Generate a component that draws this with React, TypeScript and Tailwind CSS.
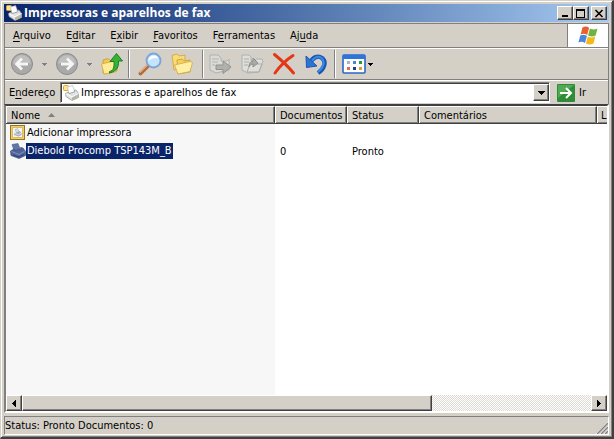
import type { ReactNode } from "react";

const MENU_ITEMS = [
  { before: "", key: "A", after: "rquivo" },
  { before: "E", key: "d", after: "itar" },
  { before: "E", key: "x", after: "ibir" },
  { before: "", key: "F", after: "avoritos" },
  { before: "F", key: "e", after: "rramentas" },
  { before: "Aj", key: "u", after: "da" },
];

const PRINTERS = [
  { name: "Adicionar impressora", documents: "", status: "", comments: "", selected: false },
  { name: "Diebold Procomp TSP143M_B", documents: "0", status: "Pronto", comments: "", selected: true },
];

const RAISED =
  "border border-t-white border-l-white border-r-[#404040] border-b-[#404040] bg-[#d4d0c8] shadow-[inset_-1px_-1px_0_#808080]";

function PrinterFolderIcon() {
  return (
    <svg className="size-4 shrink-0" viewBox="0 0 16 16" aria-hidden="true">
      <rect x="0.5" y="0.5" width="5" height="5" rx="1" fill="#ffe58a" stroke="#d2a52e" />
      <path d="M4.500 2l5-1.500L12 7l-6 2z" fill="#fff" stroke="#a4adbd" strokeWidth="0.6" />
      <path d="M2.500 8.500L5 7l1 1.500L11.500 7l-.5-1.500 2-.5 2.500 3.500v4L9 15.500l-6-4z" fill="#e2e2de" stroke="#8b8e96" strokeWidth="0.7" />
      <path d="M3 9l6 3 6.500-3.500" fill="none" stroke="#fff" />
      <path d="M9 12.500v3l6.500-3V9z" fill="#b3b5b8" />
      <path d="M10.500 14.500l3-1.500" stroke="#e4b32c" />
    </svg>
  );
}

function AddPrinterIcon() {
  return (
    <svg className="size-4 shrink-0" viewBox="0 0 16 16" aria-hidden="true">
      <rect x="0.5" y="0.5" width="14" height="14" fill="#f2cf62" stroke="#94762a" />
      <rect x="2.500" y="2.500" width="10" height="10" fill="#f8f6ee" stroke="#d8bb68" />
      <path d="M5 4.500l2.500-1L9.500 7 6.500 8z" fill="#d5dce8" stroke="#a3aec0" strokeWidth="0.6" />
      <path d="M4 8.500L9.500 6l2 2v2L8.500 11.500 4 10z" fill="#a3afc2" />
      <path d="M4.500 8.500l4 1.200L11 8.300" fill="none" stroke="#eef1f6" strokeWidth="0.7" />
    </svg>
  );
}

function PrinterIcon() {
  return (
    <svg className="size-4 shrink-0" viewBox="0 0 16 16" aria-hidden="true">
      <path d="M2 1.500L8 .5 10.500 7l-6 2z" fill="#6275a6" stroke="#4a5c8b" strokeWidth="0.6" />
      <path d="M.5 8l3.500-2 1 1.500 6-1.500-.5-1.500 2.500.5 2.500 3.500v4l-6.500 3-8-3z" fill="#50639a" stroke="#3b4d7c" strokeWidth="0.7" />
      <path d="M1.500 8.500l7.500 3 5.500-3" fill="none" stroke="#8393bd" />
      <path d="M3 12l6 2 5-2.500" fill="none" stroke="#2f4070" />
    </svg>
  );
}

function WindowsFlag() {
  return (
    <svg className="size-5" viewBox="0 0 20 20" aria-hidden="true">
      <path d="M4.500 1.600c2-1.500 4.500-1.300 6.600.2L9.200 8.900C7 7.500 4.700 7.400 2.600 8.600z" fill="#e8602c" />
      <path d="M11.900 2.500c2.500 1.400 5 1.400 7.600.1l-1.900 6.900c-2.500 1.300-5 1.200-7.500-.1z" fill="#6db33f" />
      <path d="M2.300 9.500c2.200-1.200 4.400-1 6.600.4L7 16.900c-2.300-1.500-4.500-1.500-6.600-.4z" fill="#4a86dd" />
      <path d="M9.800 10.400c2.500 1.400 5 1.300 7.500.1l-1.800 6.900c-2.600 1.400-5.100 1.300-7.600 0z" fill="#f5b91c" />
    </svg>
  );
}

function NavIcon({ forward = false }: { forward?: boolean }) {
  return (
    <svg className="size-6" viewBox="0 0 24 24" aria-hidden="true">
      <circle cx="12" cy="12" r="10.500" fill="#a9a9a9" stroke="#8c8c8c" />
      <path d="M3 12a9 9 0 0 1 18 0c-5-3-13-3-18 0z" fill="#bfbfbf" />
      <path
        d={forward ? "M6 12h11M12 6.500l5.500 5.500-5.500 5.500" : "M18 12H7M12 6.500L6.500 12l5.500 5.500"}
        fill="none"
        stroke="#f5f5f5"
        strokeWidth="2.800"
      />
    </svg>
  );
}

function FolderUpIcon() {
  return (
    <svg className="size-6" viewBox="0 0 24 24" aria-hidden="true">
      <path d="M3 8l5-1.500 2 2 7-1.500v12L5 22l-2-1z" fill="#f0c94e" stroke="#c79a2c" strokeWidth="0.8" />
      <path d="M1.500 12l13-3 3 1-2 10L4 22z" fill="#ffeb9a" stroke="#d3a93a" strokeWidth="0.8" />
      <path d="M9.500 19.500c4-1 4.800-4 4.500-10h-4l6.500-8 6 7.500h-4c.5 6-2 10.500-9 12z" fill="#35b335" stroke="#177517" strokeWidth="0.9" />
    </svg>
  );
}

function SearchIcon() {
  return (
    <svg className="size-6" viewBox="0 0 24 24" aria-hidden="true">
      <path d="M10.500 13.500L2.500 21.500" stroke="#b3683a" strokeWidth="3.800" strokeLinecap="round" />
      <path d="M10 12.500l-8 8" stroke="#e8b07e" strokeWidth="1.200" />
      <circle cx="15.500" cy="8.500" r="7" fill="#c3e4fa" stroke="#7ba4d8" strokeWidth="1.800" />
      <path d="M10.500 9a5.200 5.200 0 0 1 5.500-5.500c2.500 0 4 1.500 4 3-4-1-6.500 0-9.500 2.500z" fill="#fff" />
    </svg>
  );
}

function FoldersIcon() {
  return (
    <svg className="size-6" viewBox="0 0 24 24" aria-hidden="true">
      <path d="M2 3.500L7 2l2 2 6-1v12L4 18z" fill="#f8dc78" stroke="#d0a136" strokeWidth="0.8" />
      <path d="M7 8l5-1 2 2 6-1v12L8 22z" fill="#f5d25f" stroke="#c99a30" strokeWidth="0.8" />
      <path d="M4.500 13L20 9.500l2.500 1-2.500 9L8 22z" fill="#fff0a6" stroke="#d3a93a" strokeWidth="0.8" />
    </svg>
  );
}

function MoveToIcon() {
  return (
    <svg className="size-6" viewBox="0 0 24 24" aria-hidden="true">
      <path d="M2 3h8l3 3v3h6l2-2v11l-13 3-6-3z" fill="#dadad6" stroke="#b0b0ac" />
      <path d="M4 7h7M4 10h6M4 13h3" stroke="#b3b3af" />
      <path d="M8 13h7V9l8 6-8 6.500v-4H8z" fill="#b0b0ac" stroke="#92928e" />
    </svg>
  );
}

function CopyToIcon() {
  return (
    <svg className="size-6" viewBox="0 0 24 24" aria-hidden="true">
      <path d="M2 3h7l2 2v4h4l1-2h6l1 2-4 11-11 1-6-3z" fill="#dededa" stroke="#b0b0ac" />
      <path d="M4 7h5M4 10h5M4 13h4M7 20l3-8h12l-3 8z" fill="none" stroke="#adada9" />
      <path d="M9 15c0-4 2-6 4-6V6l5 5-5 4v-3c-2 0-3 1-4 3z" fill="#a9a9a5" stroke="#8f8f8b" />
    </svg>
  );
}

function DeleteIcon() {
  return (
    <svg className="size-6" viewBox="0 0 24 24" aria-hidden="true">
      <path d="M2.500 2.500C8 7 15 13 21.500 21M21 3.500C14 8 8 14 3 21" fill="none" stroke="#e33716" strokeWidth="3" strokeLinecap="round" />
    </svg>
  );
}

function UndoIcon() {
  return (
    <svg className="size-6" viewBox="0 0 24 24" aria-hidden="true">
      <path d="M6 11c3-6 8-8 12-5 5 4 2 11-4 15" fill="none" stroke="#1c57b0" strokeWidth="4.400" />
      <path d="M6.500 11c3-6 7.500-7.500 11-5 4 3.500 2 10-3.500 14" fill="none" stroke="#3b8be6" strokeWidth="2" />
      <path d="M2 4l.5 11.500L13 14z" fill="#2b74d2" stroke="#1c57b0" />
    </svg>
  );
}

function ViewsIcon() {
  return (
    <svg className="size-6" viewBox="0 0 24 24" aria-hidden="true">
      <rect x="1" y="3" width="22" height="18" rx="1" fill="#fff" stroke="#2867c8" strokeWidth="1.600" />
      <path d="M1 3h22v4H1z" fill="#2f74dc" />
      <path d="M5 9h3v3H5z" fill="#a8b3d0" />
      <path d="M11 9h3v3h-3z" fill="#4f82d8" />
      <path d="M17 9h3v3h-3z" fill="#279a2d" />
      <path d="M5 15h3v3H5z" fill="#e2703a" />
      <path d="M11 15h3v3h-3z" fill="#243c94" />
      <path d="M17 15h3v3h-3z" fill="#d4a22d" />
    </svg>
  );
}

function Caret({ className }: { className: string }) {
  return (
    <svg className={`h-[3px] w-[5px] shrink-0 ${className}`} viewBox="0 0 5 3" shapeRendering="crispEdges" aria-hidden="true">
      <path d="M0 0h5L2.500 3z" fill="currentColor" />
    </svg>
  );
}

function ToolButton({ label, children }: { label: string; children: ReactNode }) {
  return (
    <button type="button" aria-label={label} className="flex shrink-0 items-center">
      {children}
    </button>
  );
}

function Separator() {
  return <div className="mx-1 h-7 w-[2px] shrink-0 border-r border-l border-r-white border-l-[#808080]" />;
}

function TitleBar() {
  const button = `flex h-[14px] w-4 items-center justify-center ${RAISED}`;
  return (
    <header className="flex h-[18px] items-center bg-linear-to-r from-[#0a246a] to-[#a6caf0] pr-[2px] pl-[2px]">
      <PrinterFolderIcon />
      <h1 className="ml-[2px] flex-1 font-['Open_Sans','DejaVu_Sans_Condensed',sans-serif] text-[12px] leading-[18px] font-bold whitespace-nowrap text-white">
        Impressoras e aparelhos de fax
      </h1>
      <button type="button" aria-label="Minimizar" className={button}>
        <svg className="h-[9px] w-[10px]" viewBox="0 0 10 9" shapeRendering="crispEdges" aria-hidden="true">
          <path d="M2 6h6v2H2z" />
        </svg>
      </button>
      <button type="button" aria-label="Maximizar" className={button}>
        <svg className="h-[9px] w-[10px]" viewBox="0 0 10 9" shapeRendering="crispEdges" aria-hidden="true">
          <path fillRule="evenodd" d="M0 0h9v9H0zM1 2v6h7V2z" />
        </svg>
      </button>
      <button type="button" aria-label="Fechar" className={`ml-[2px] ${button}`}>
        <svg className="h-[9px] w-[10px]" viewBox="0 0 10 9" aria-hidden="true">
          <path d="M1.500 1l7 7M8.500 1l-7 7" stroke="#000" strokeWidth="1.600" />
        </svg>
      </button>
    </header>
  );
}

function MenuBar() {
  return (
    <div className="flex h-6 border-b border-[#808080]">
      <nav className="flex flex-1 items-center gap-[15px] border-r border-[#808080] pl-2">
        {MENU_ITEMS.map((item) => (
          <button type="button" key={item.before + item.key + item.after}>
            {item.before}
            <span className="underline underline-offset-2">{item.key}</span>
            {item.after}
          </button>
        ))}
      </nav>
      <div className="flex w-10 items-center justify-center bg-white">
        <WindowsFlag />
      </div>
    </div>
  );
}

function Toolbar() {
  return (
    <div className="flex h-8 items-center border-t border-b border-t-white border-b-[#808080] pl-[5px]">
      <ToolButton label="Voltar">
        <NavIcon />
        <Caret className="mx-2 text-[#808080]" />
      </ToolButton>
      <ToolButton label="Avançar">
        <NavIcon forward />
        <Caret className="mx-2 text-[#808080]" />
      </ToolButton>
      <ToolButton label="Acima">
        <FolderUpIcon />
      </ToolButton>
      <Separator />
      <div className="flex gap-2 px-1">
        <ToolButton label="Pesquisar">
          <SearchIcon />
        </ToolButton>
        <ToolButton label="Pastas">
          <FoldersIcon />
        </ToolButton>
      </div>
      <Separator />
      <div className="flex gap-2 pr-[2px]">
        <ToolButton label="Mover para">
          <MoveToIcon />
        </ToolButton>
        <ToolButton label="Copiar para">
          <CopyToIcon />
        </ToolButton>
        <ToolButton label="Excluir">
          <DeleteIcon />
        </ToolButton>
        <ToolButton label="Desfazer">
          <UndoIcon />
        </ToolButton>
      </div>
      <Separator />
      <div className="pl-[2px]">
        <ToolButton label="Modos de exibição">
          <ViewsIcon />
          <Caret className="ml-[2px] text-black" />
        </ToolButton>
      </div>
    </div>
  );
}

function AddressBar() {
  return (
    <div className="flex h-6 items-center border-t border-t-white pl-1">
      <label htmlFor="address" className="w-[51px] shrink-0">
        E<span className="underline underline-offset-2">n</span>dereço
      </label>
      <div className="flex h-[21px] flex-1 items-center border border-t-[#808080] border-r-white border-b-white border-l-[#808080] bg-white pl-[2px] shadow-[inset_1px_1px_0_#404040]">
        <PrinterFolderIcon />
        <input
          id="address"
          defaultValue="Impressoras e aparelhos de fax"
          className="ml-[2px] min-w-0 flex-1 bg-transparent outline-none"
        />
        <button type="button" aria-label="Mostrar endereços" className={`flex h-[17px] w-4 items-center justify-center ${RAISED}`}>
          <svg className="h-1 w-[7px]" viewBox="0 0 7 4" shapeRendering="crispEdges" aria-hidden="true">
            <path d="M0 0h7L3.500 4z" />
          </svg>
        </button>
      </div>
      <button type="button" className="flex w-[58px] shrink-0 items-center gap-1 pl-[7px]">
        <svg className="size-[18px]" viewBox="0 0 18 18" aria-hidden="true">
          <rect width="18" height="18" rx="1" fill="#2f8c36" />
          <path d="M1 1h16L1 14z" fill="#52a954" />
          <path d="M3 9h11M9 4l5 5-5 5" fill="none" stroke="#fff" strokeWidth="2" />
        </svg>
        Ir
      </button>
    </div>
  );
}

function PrinterList() {
  const head =
    "h-[18px] overflow-hidden whitespace-nowrap border-t border-r border-b border-t-white border-r-[#404040] border-b-[#404040] bg-[#d4d0c8] pl-[5px] text-left font-normal shadow-[inset_1px_0_0_#fff,inset_-1px_-1px_0_#808080]";
  return (
    <div className="flex-1 overflow-hidden bg-linear-to-r from-[#f7f7f7] from-[269px] to-white to-[269px]">
      <table className="w-full table-fixed border-separate border-spacing-0">
        <colgroup>
          <col className="w-[269px]" />
          <col className="w-[72px]" />
          <col className="w-[72px]" />
          <col />
          <col className="w-[10px]" />
        </colgroup>
        <thead>
          <tr>
            <th className={head}>
              <span className="flex items-center gap-2">
                Nome
                <svg className="h-1 w-[7px]" viewBox="0 0 7 4" aria-hidden="true">
                  <path d="M0 4h7L3.500 0z" fill="#808080" />
                </svg>
              </span>
            </th>
            <th className={head}>Documentos</th>
            <th className={head}>Status</th>
            <th className={head}>Comentários</th>
            <th className="border-t border-b border-t-white border-b-[#404040] bg-[#d4d0c8] pl-1 text-left font-normal shadow-[inset_1px_0_0_#fff,inset_0_-1px_0_#808080]">
              L
            </th>
          </tr>
        </thead>
        <tbody>
          {PRINTERS.map((printer) => (
            <tr key={printer.name} className="h-[18px]">
              <td className="pl-1">
                <span className="flex items-center">
                  {printer.selected ? <PrinterIcon /> : <AddPrinterIcon />}
                  <span
                    className={
                      printer.selected ? "bg-[#0a246a] pr-px pl-px leading-4 text-white" : "pl-px leading-4"
                    }
                  >
                    {printer.name}
                  </span>
                </span>
              </td>
              <td className="px-[5px]">{printer.documents}</td>
              <td className="px-[5px]">{printer.status}</td>
              <td className="px-[5px]">{printer.comments}</td>
              <td />
            </tr>
          ))}
        </tbody>
      </table>
    </div>
  );
}

function ScrollBar() {
  const button = `flex h-4 w-4 shrink-0 items-center justify-center ${RAISED}`;
  return (
    <div className="flex h-4 bg-[repeating-conic-gradient(#fff_0_25%,#dedbd5_0_50%)] bg-size-[2px_2px]">
      <button type="button" aria-label="Rolar para a esquerda" className={button}>
        <svg className="h-[7px] w-1" viewBox="0 0 4 7" shapeRendering="crispEdges" aria-hidden="true">
          <path d="M4 0v7L0 3.500z" />
        </svg>
      </button>
      <div className="flex-1">
        <div className={`h-4 w-[72%] ${RAISED}`} />
      </div>
      <button type="button" aria-label="Rolar para a direita" className={button}>
        <svg className="h-[7px] w-1" viewBox="0 0 4 7" shapeRendering="crispEdges" aria-hidden="true">
          <path d="M0 0v7l4-3.500z" />
        </svg>
      </button>
    </div>
  );
}

function StatusBar() {
  return (
    <footer className="mt-[3px] flex h-[19px] items-center justify-between border border-t-[#808080] border-r-white border-b-white border-l-[#808080]">
      <span>Status: Pronto Documentos: 0</span>
      <svg className="size-3 self-end" viewBox="0 0 12 12" aria-hidden="true">
        <path d="M0 12L12 0M4 12l8-8M8 12l4-4" stroke="#fff" />
        <path d="M1 12L12 1M5 12l7-7M9 12l3-3" stroke="#808080" strokeWidth="1.400" />
      </svg>
    </footer>
  );
}

export default function App() {
  return (
    <div className="flex h-screen flex-col border-t border-r-2 border-b-2 border-l border-t-[#d4d0c8] border-r-[#404040] border-b-[#404040] border-l-[#d4d0c8] bg-[#d4d0c8] pt-[3px] pr-[3px] pb-[2px] pl-[3px] font-['DejaVu_Sans_Condensed','Liberation_Sans',sans-serif] text-[11px] leading-[13px] text-black shadow-[inset_1px_1px_0_#fff,inset_-1px_-1px_0_#808080]">
      <TitleBar />
      <div className="mt-px flex min-h-0 flex-1 flex-col">
        <div className="border-t border-r border-l border-[#808080]">
          <MenuBar />
          <Toolbar />
          <AddressBar />
        </div>
        <main className="flex min-h-0 flex-1 flex-col border-2 border-t-[#404040] border-r-white border-b-white border-l-[#808080]">
          <PrinterList />
          <ScrollBar />
        </main>
        <StatusBar />
      </div>
    </div>
  );
}
